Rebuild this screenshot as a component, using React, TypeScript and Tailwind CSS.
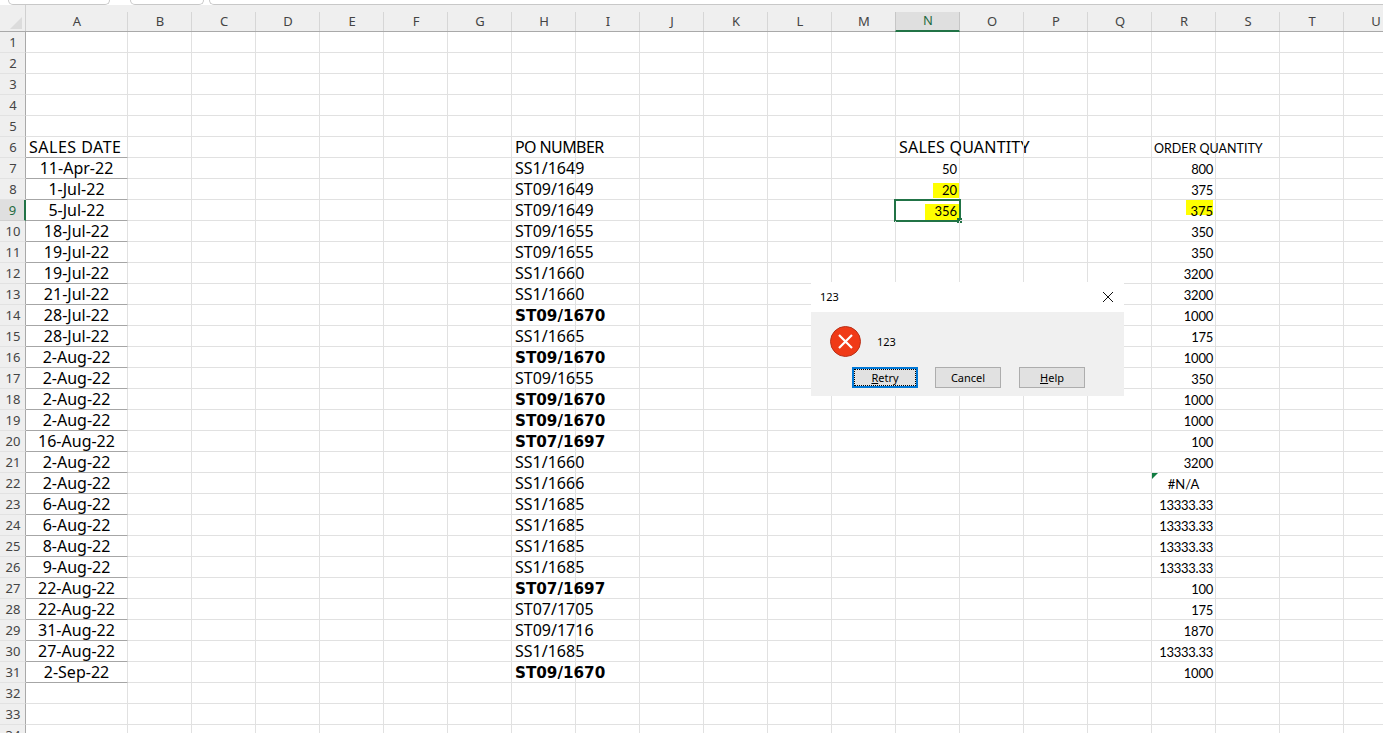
const COLS = ["A", "B", "C", "D", "E", "F", "G", "H", "I", "J", "K", "L", "M", "N", "O", "P", "Q", "R", "S", "T", "U"];

const dates = [
  "11-Apr-22", "1-Jul-22", "5-Jul-22", "18-Jul-22", "19-Jul-22", "19-Jul-22", "21-Jul-22", "28-Jul-22", "28-Jul-22",
  "2-Aug-22", "2-Aug-22", "2-Aug-22", "2-Aug-22", "16-Aug-22", "2-Aug-22", "2-Aug-22", "6-Aug-22", "6-Aug-22",
  "8-Aug-22", "9-Aug-22", "22-Aug-22", "22-Aug-22", "31-Aug-22", "27-Aug-22", "2-Sep-22",
];

const poNumbers = [
  "SS1/1649", "ST09/1649", "ST09/1649", "ST09/1655", "ST09/1655", "SS1/1660", "SS1/1660", "*ST09/1670", "SS1/1665",
  "*ST09/1670", "ST09/1655", "*ST09/1670", "*ST09/1670", "*ST07/1697", "SS1/1660", "SS1/1666", "SS1/1685", "SS1/1685",
  "SS1/1685", "SS1/1685", "*ST07/1697", "ST07/1705", "ST09/1716", "SS1/1685", "*ST09/1670",
];

const orderQty = [
  "800", "375", "375", "350", "350", "3200", "3200", "1000", "175", "1000", "350", "1000", "1000", "100", "3200", "#N/A",
  "13333.33", "13333.33", "13333.33", "13333.33", "100", "175", "1870", "13333.33", "1000",
];

const rows = Array.from({ length: 34 }, (_, i) => i + 1);

function ColumnHeader() {
  return (
    <div className="flex items-end h-[27px] bg-[#efefef] border-b border-[#a9a9a9] text-[13px] text-[#444] font-['Noto_Sans',sans-serif]">
      <div className="w-[26px] h-[26px] shrink-0 flex items-end justify-end pr-[3px] pb-[2px] border-r border-[#d0d0d0]">
        <div className="w-0 h-0 border-l-[12px] border-b-[12px] border-l-transparent border-b-[#dcdcdc]" />
      </div>
      {COLS.map((c) =>
        c === "N" ? (
          <div
            key={c}
            className="shrink-0 -ml-px w-[65px] h-[20px] -mb-px flex items-center justify-center pl-px bg-[#dfdfdf] text-[#1f6b41] border-b-2 border-[#217346] border-x border-x-[#c6c6c6]"
          >
            {c}
          </div>
        ) : (
          <div
            key={c}
            className={`shrink-0 h-[19px] flex items-center justify-center pl-px border-r border-[#d6d6d6] ${c === "A" ? "w-[102px]" : "w-[64px]"}`}
          >
            {c}
          </div>
        ),
      )}
    </div>
  );
}

function Cell({ col, row }: { col: string; row: number }) {
  const width = col === "A" ? "w-[102px]" : "w-[64px]";
  let content = null;
  let extra = "";

  if (col === "A" && row >= 6 && row <= 31) {
    extra = "border-b-[#a6a6a6]";
    content =
      row === 6 ? (
        <span className="absolute left-[3px] top-0 whitespace-nowrap tracking-[0.5px] text-[16px] leading-[20px] text-black font-['Noto_Sans',sans-serif]">
          SALES DATE
        </span>
      ) : (
        <span className="absolute inset-0 text-center text-[16px] leading-[21px] text-black font-['Noto_Sans',sans-serif]">{dates[row - 7]}</span>
      );
  }
  if (col === "H" && row >= 6 && row <= 31) {
    const po = row === 6 ? "PO NUMBER" : poNumbers[row - 7];
    const bold = po.startsWith("*");
    content = (
      <span
        className={`absolute left-[3px] top-0 whitespace-nowrap text-black ${
          bold
            ? "text-[15.2px] leading-[22px] font-bold font-['DejaVu_Sans',sans-serif]"
            : row === 6
              ? "text-[16px] leading-[20px] tracking-[-0.6px] font-['Noto_Sans',sans-serif]"
              : "text-[16px] leading-[21px] font-['Noto_Sans',sans-serif]"
        }`}
      >
        {po.replace("*", "")}
      </span>
    );
  }
  if (col === "N") {
    if (row === 6) {
      content = (
        <span className="absolute left-[3px] top-0 whitespace-nowrap tracking-[0.2px] text-[16px] leading-[20px] text-black font-['Noto_Sans',sans-serif]">
          SALES QUANTITY
        </span>
      );
    } else if (row === 7) {
      content = <span className="absolute right-[2px] top-[2px] text-[13px] leading-[19px] text-black font-['Lato',sans-serif]">50</span>;
    } else if (row === 8) {
      content = (
        <span className="absolute right-0 top-[4px] w-[26px] h-[15px] pr-[2px] text-right bg-[#ffff00] text-[13px] leading-[15px] text-black font-['Lato',sans-serif]">
          20
        </span>
      );
    } else if (row === 9) {
      content = (
        <span className="absolute right-0 top-[4px] w-[34px] h-[16px] pr-[2px] text-right bg-[#ffff00] text-[13px] leading-[15px] text-black font-['Lato',sans-serif]">
          356
        </span>
      );
    }
  }
  if (col === "R") {
    if (row === 6) {
      content = (
        <span className="absolute left-[2px] top-[3px] whitespace-nowrap text-[12.5px] leading-[17px] text-black font-['Lato',sans-serif]">
          ORDER QUANTITY
        </span>
      );
    } else if (row === 9) {
      content = (
        <span className="absolute right-[2px] top-0 w-[27px] h-[15px] text-right bg-[#ffff00] text-[13px] leading-[23px] text-black font-['Lato',sans-serif]">
          375
        </span>
      );
    } else if (row === 22) {
      content = (
        <>
          <span className="absolute left-0 top-0 w-0 h-0 border-t-[6px] border-r-[6px] border-t-[#107c41] border-r-transparent" />
          <span className="absolute inset-0 top-[2px] text-center text-[13px] leading-[19px] text-black font-['Lato',sans-serif]">#N/A</span>
        </>
      );
    } else if (row >= 7 && row <= 31) {
      content = (
        <span className="absolute right-[2px] top-[2px] whitespace-nowrap tracking-[-0.25px] text-[13px] leading-[19px] text-black font-['Lato',sans-serif]">
          {orderQty[row - 7]}
        </span>
      );
    }
  }

  return (
    <div className={`relative shrink-0 h-[21px] ${width} border-r border-b border-[#e1e1e1] ${extra}`}>
      {content}
      {col === "N" && row === 9 && (
        <div className="absolute left-[-2px] top-[-1px] w-[67px] h-[23px] border-2 border-[#217346]">
          <div className="absolute right-[-3px] bottom-[-3px] w-[5px] h-[5px] bg-[#217346]" />
        </div>
      )}
    </div>
  );
}

function Dialog() {
  const btn =
    "w-[66px] h-[21px] flex items-center justify-center pt-[2px] bg-[#e1e1e1] border border-[#adadad] text-[11px] text-black font-['Noto_Sans',sans-serif]";
  return (
    <div className="absolute left-[811px] top-[282px] w-[313px] h-[114px] flex flex-col bg-[#f0f0f0] font-['Noto_Sans',sans-serif]">
      <div className="h-[30px] bg-white flex items-center justify-between pl-[9px] pr-[10px] text-[11px] text-black">
        <span>123</span>
        <svg width="12" height="12" viewBox="0 0 12 12" fill="none" stroke="#111" strokeWidth="1">
          <path d="M1 1l10 10M11 1L1 11" />
        </svg>
      </div>
      <div className="flex items-center pl-[19px] mt-[14px] text-[11px] text-black">
        <svg width="31" height="31" viewBox="0 0 31 31" fill="none">
          <circle cx="15.5" cy="15.5" r="15" fill="#f03a17" stroke="#b8321a" />
          <path d="M9 9l13 13M22 9L9 22" stroke="#fff" strokeWidth="2.2" />
        </svg>
        <span className="ml-[16px] pt-[2px]">123</span>
      </div>
      <div className="flex mt-[10px] ml-[41px]">
        <button className={`${btn} !border-2 !border-[#0078d7] outline-1 outline-dotted outline-black -outline-offset-3`}>
          <u>R</u>etry
        </button>
        <button className={`${btn} ml-[17px]`}>Cancel</button>
        <button className={`${btn} ml-[18px]`}>
          <u>H</u>elp
        </button>
      </div>
    </div>
  );
}

export default function App() {
  return (
    <div className="relative w-[1383px] h-[733px] overflow-hidden bg-white">
      <div className="flex h-[5px] bg-white">
        <div className="ml-[8px] w-[102px] border border-t-0 border-[#c8c8c8] rounded-b-[5px]" />
        <div className="ml-[20px] w-[74px] border border-t-0 border-[#c8c8c8] rounded-b-[5px]" />
        <div className="ml-[5px] grow border-b border-l border-[#c8c8c8] rounded-bl-[5px]" />
      </div>
      <ColumnHeader />
      {rows.map((row) => (
        <div key={row} className="flex h-[21px]">
          <div
            className={`w-[26px] shrink-0 flex items-center justify-center pt-[2px] pl-px border-b text-[13px] font-['Noto_Sans',sans-serif] ${
              row === 9
                ? "bg-[#dfdfdf] text-[#1f6b41] border-r-2 border-r-[#217346] border-b-[#d0d0d0]"
                : "bg-[#efefef] text-[#444] border-r border-r-[#a9a9a9] border-b-[#e2e2e2]"
            }`}
          >
            {row}
          </div>
          {COLS.map((c) => (
            <Cell key={c} col={c} row={row} />
          ))}
        </div>
      ))}
      <Dialog />
    </div>
  );
}
